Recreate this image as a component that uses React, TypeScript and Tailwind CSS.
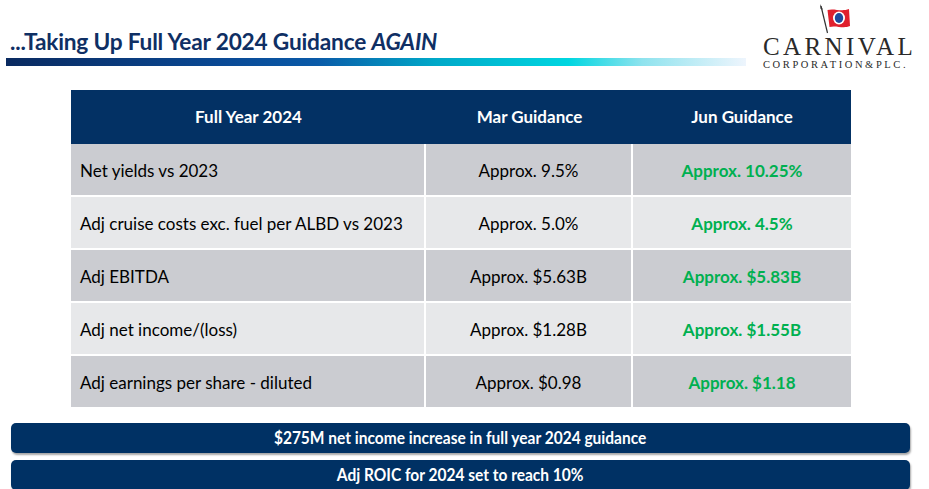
const rows = [
  { label: "Net yields vs 2023", mar: "Approx. 9.5%", jun: "Approx. 10.25%" },
  { label: "Adj cruise costs exc. fuel per ALBD vs 2023", mar: "Approx. 5.0%", jun: "Approx. 4.5%" },
  { label: "Adj EBITDA", mar: "Approx. $5.63B", jun: "Approx. $5.83B" },
  { label: "Adj net income/(loss)", mar: "Approx. $1.28B", jun: "Approx. $1.55B" },
  { label: "Adj earnings per share - diluted", mar: "Approx. $0.98", jun: "Approx. $1.18" },
];

function Flag() {
  return (
    <svg width="40" height="32" viewBox="0 0 40 32">
      <line x1="6" y1="3" x2="12.5" y2="30" stroke="#333" strokeWidth="1.2" />
      <path d="M5 1 L7.8 6.5 L5.6 6 Z" fill="#333" />
      <path d="M12.5 7 C19 5 26 9 34 6 L35 23 C28 26 21 22 14.5 24 Z" fill="#e0202e" />
      <ellipse cx="24" cy="15" rx="6" ry="6.5" fill="#fff" />
      <ellipse cx="24" cy="15" rx="4.2" ry="5" fill="#1f4a9c" />
    </svg>
  );
}

export default function App() {
  return (
    <div className="w-[929px] h-[489px] bg-white overflow-hidden font-['Lato',sans-serif]">
      <div className="flex h-[86px]">
        <div className="w-[740px] ml-[6px] pt-[27px] shrink-0">
          <h1 className="pl-[4px] h-[29px] text-[22.7px] leading-[29px] font-bold text-[#0f2f64] tracking-[-0.2px]">
            ...Taking Up Full Year 2024 Guidance <span className="italic">AGAIN</span>
          </h1>
          <div className="mt-[2px] h-[8px] bg-[linear-gradient(to_right,#0a2a60_0%,#0a4a96_30%,#0a5aa8_42%,#00a8c8_58%,#00d6e0_76%,#8fe3ee_86%,#eef5fd_100%)]" />
        </div>
        <div className="ml-[17px] w-[150px] flex flex-col pt-[3px] font-['Liberation_Serif',serif] text-[#2a2a2a]">
          <div className="ml-[52px] h-[32px] overflow-visible">
            <Flag />
          </div>
          <div className="text-[25px] leading-[24px] tracking-[3.4px] whitespace-nowrap">CARNIVAL</div>
          <div className="text-[10.5px] leading-[12px] tracking-[2.6px] whitespace-nowrap">CORPORATION&amp;PLC.</div>
        </div>
      </div>

      <div className="ml-[71px] w-[780px] mt-[4px]">
        <div className="grid grid-cols-[355px_207px_218px] h-[54px] bg-[#033164] text-white font-bold text-[17px] items-center text-center">
          <div>Full Year 2024</div>
          <div>Mar Guidance</div>
          <div>Jun Guidance</div>
        </div>
        {rows.map((r, i) => (
          <div
            key={r.label}
            className="grid grid-cols-[353px_205px_218px] gap-x-[2px] h-[53px] bg-white border-b-2 border-white"
          >
            <div className={(i % 2 === 0 ? "bg-[#cbccd1]" : "bg-[#e7e8ea]") + " flex items-center pl-[9px] pt-[2px] text-[17px] text-black"}>
              {r.label}
            </div>
            <div className={(i % 2 === 0 ? "bg-[#cbccd1]" : "bg-[#e7e8ea]") + " flex items-center justify-center pt-[2px] text-[17px] text-black"}>
              {r.mar}
            </div>
            <div className={(i % 2 === 0 ? "bg-[#cbccd1]" : "bg-[#e7e8ea]") + " flex items-center justify-center pt-[2px] text-[17px] font-bold text-[#00b050]"}>
              {r.jun}
            </div>
          </div>
        ))}
      </div>

      <div className="mx-[11px] w-[899px] mt-[14px] flex flex-col gap-[7px]">
        <div className="h-[30px] rounded-[5px] bg-[#003164] shadow-[1px_2px_2px_rgba(0,0,0,0.35)] flex items-center justify-center">
          <span className="inline-block scale-x-[0.94] text-white font-bold text-[16.5px] whitespace-nowrap">
            $275M net income increase in full year 2024 guidance
          </span>
        </div>
        <div className="h-[30px] rounded-[5px] bg-[#003164] shadow-[1px_2px_2px_rgba(0,0,0,0.35)] flex items-center justify-center">
          <span className="inline-block scale-x-[0.94] text-white font-bold text-[16.5px] whitespace-nowrap">
            Adj ROIC for 2024 set to reach 10%
          </span>
        </div>
      </div>
    </div>
  );
}
